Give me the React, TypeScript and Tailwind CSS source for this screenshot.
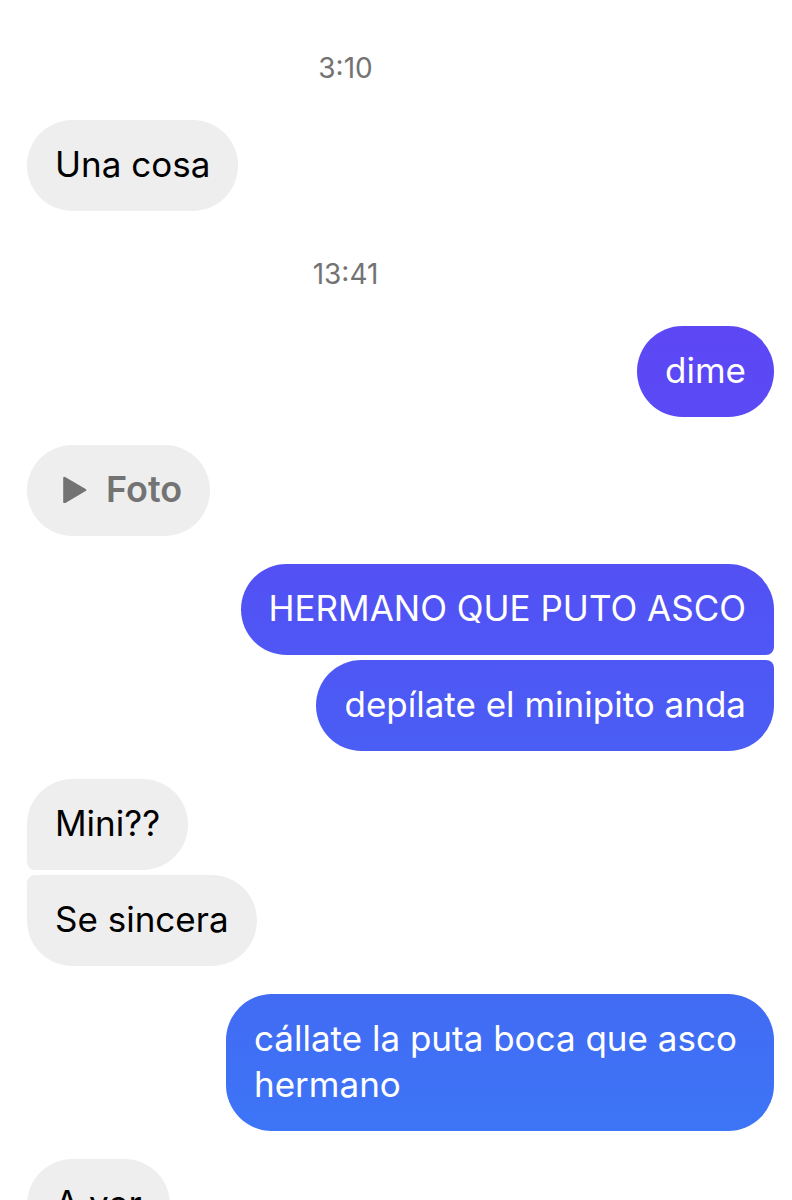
import React from 'react';
import clsx from 'clsx';

type Message = {
  text: string;
  tone?: string;
  photo?: boolean;
};

type Block =
  | { kind: 'time'; label: string }
  | { kind: 'received' | 'sent'; messages: Message[] };

const blocks: Block[] = [
  { kind: 'time', label: '3:10' },
  { kind: 'received', messages: [{ text: 'Una cosa' }] },
  { kind: 'time', label: '13:41' },
  { kind: 'sent', messages: [{ text: 'dime', tone: 'from-[#5d47f5] to-[#5a4af5]' }] },
  { kind: 'received', messages: [{ text: 'Foto', photo: true }] },
  {
    kind: 'sent',
    messages: [
      { text: 'HERMANO QUE PUTO ASCO', tone: 'from-[#5350f4] to-[#4f57f5]' },
      { text: 'depílate el minipito anda', tone: 'from-[#4e57f4] to-[#4a5ef5]' },
    ],
  },
  { kind: 'received', messages: [{ text: 'Mini??' }, { text: 'Se sincera' }] },
  {
    kind: 'sent',
    messages: [
      { text: 'cállate la puta boca que asco hermano', tone: 'from-[#416bf3] to-[#3d75f7]' },
    ],
  },
  { kind: 'received', messages: [{ text: 'A ver' }] },
];

function PlayIcon() {
  return (
    <svg viewBox="0 0 26 28" className="h-7 w-[26px]" aria-hidden="true">
      <path
        d="M2.5 3 L23 15 L2.5 27 Z"
        fill="currentColor"
        stroke="currentColor"
        strokeWidth="2.6"
        strokeLinejoin="round"
      />
    </svg>
  );
}

function Bubble({ message, sent, first, last }: {
  message: Message;
  sent: boolean;
  first: boolean;
  last: boolean;
}) {
  const shape = clsx(
    'max-w-[548px] rounded-[46px] px-7 pt-[21px] pb-6 leading-[46px]',
    sent ? 'bg-linear-to-b text-white' : 'bg-[#eeeeee]',
    sent && !first && 'rounded-tr-lg',
    sent && !last && 'rounded-br-lg',
    !sent && !first && 'rounded-tl-lg',
    !sent && !last && 'rounded-bl-lg',
    message.tone
  );

  if (message.photo) {
    return (
      <button type="button" className={clsx(shape, 'flex items-center gap-[18px] pl-[35px] text-[36px] font-semibold text-[#737373]')}>
        <PlayIcon />
        {message.text}
      </button>
    );
  }

  return <p className={clsx(shape, 'text-[35px]')}>{message.text}</p>;
}

export default function App() {
  return (
    <main className="h-screen overflow-hidden bg-white pt-[54px] pr-[18px] pl-[27px] font-['Inter','Liberation_Sans',sans-serif] text-black">
      <div className="flex flex-col gap-7">
        {blocks.map((block, i) => {
          if (block.kind === 'time') {
            return (
              <time
                key={i}
                className={clsx(
                  'pr-[110px] pb-[10px] text-center text-[28px] leading-7 text-[#737373]',
                  i > 0 && 'pt-[21px]'
                )}
              >
                {block.label}
              </time>
            );
          }

          const sent = block.kind === 'sent';
          return (
            <div key={i} className={clsx('flex flex-col gap-[5px]', sent ? 'items-end' : 'items-start')}>
              {block.messages.map((message, j) => (
                <Bubble
                  key={message.text}
                  message={message}
                  sent={sent}
                  first={j === 0}
                  last={j === block.messages.length - 1}
                />
              ))}
            </div>
          );
        })}
      </div>
    </main>
  );
}
